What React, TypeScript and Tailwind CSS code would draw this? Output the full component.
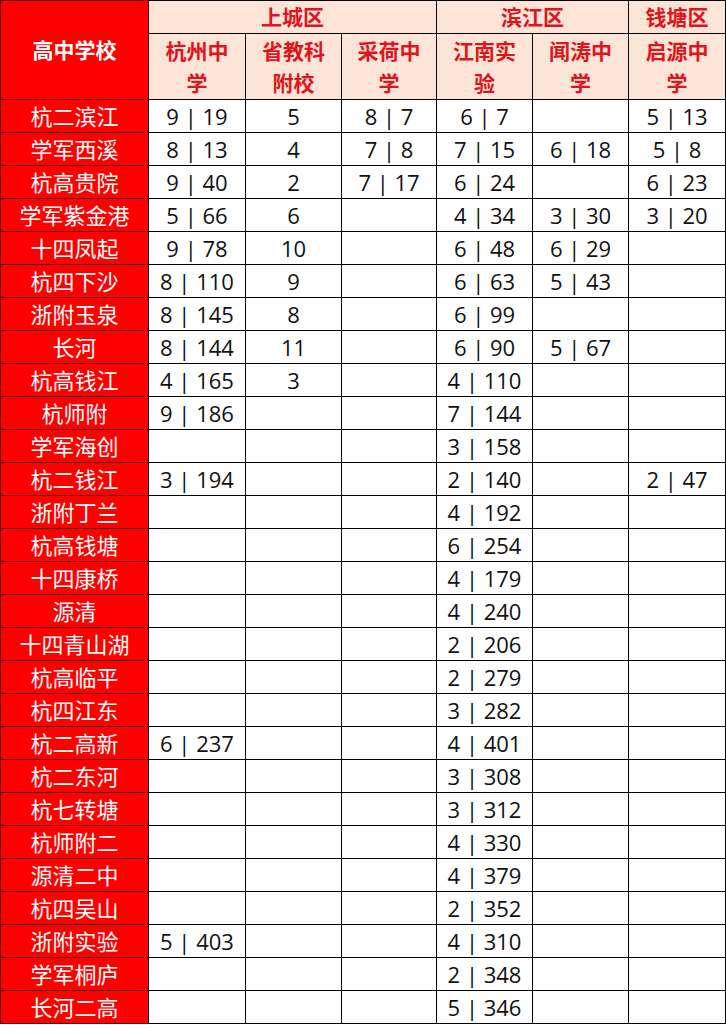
import React from 'react';

type Row = { name: string; cells: string[] };

const rows: Row[] = [
  { name: '杭二滨江', cells: ['9 | 19', '5', '8 | 7', '6 | 7', '', '5 | 13'] },
  { name: '学军西溪', cells: ['8 | 13', '4', '7 | 8', '7 | 15', '6 | 18', '5 | 8'] },
  { name: '杭高贵院', cells: ['9 | 40', '2', '7 | 17', '6 | 24', '', '6 | 23'] },
  { name: '学军紫金港', cells: ['5 | 66', '6', '', '4 | 34', '3 | 30', '3 | 20'] },
  { name: '十四凤起', cells: ['9 | 78', '10', '', '6 | 48', '6 | 29', ''] },
  { name: '杭四下沙', cells: ['8 | 110', '9', '', '6 | 63', '5 | 43', ''] },
  { name: '浙附玉泉', cells: ['8 | 145', '8', '', '6 | 99', '', ''] },
  { name: '长河', cells: ['8 | 144', '11', '', '6 | 90', '5 | 67', ''] },
  { name: '杭高钱江', cells: ['4 | 165', '3', '', '4 | 110', '', ''] },
  { name: '杭师附', cells: ['9 | 186', '', '', '7 | 144', '', ''] },
  { name: '学军海创', cells: ['', '', '', '3 | 158', '', ''] },
  { name: '杭二钱江', cells: ['3 | 194', '', '', '2 | 140', '', '2 | 47'] },
  { name: '浙附丁兰', cells: ['', '', '', '4 | 192', '', ''] },
  { name: '杭高钱塘', cells: ['', '', '', '6 | 254', '', ''] },
  { name: '十四康桥', cells: ['', '', '', '4 | 179', '', ''] },
  { name: '源清', cells: ['', '', '', '4 | 240', '', ''] },
  { name: '十四青山湖', cells: ['', '', '', '2 | 206', '', ''] },
  { name: '杭高临平', cells: ['', '', '', '2 | 279', '', ''] },
  { name: '杭四江东', cells: ['', '', '', '3 | 282', '', ''] },
  { name: '杭二高新', cells: ['6 | 237', '', '', '4 | 401', '', ''] },
  { name: '杭二东河', cells: ['', '', '', '3 | 308', '', ''] },
  { name: '杭七转塘', cells: ['', '', '', '3 | 312', '', ''] },
  { name: '杭师附二', cells: ['', '', '', '4 | 330', '', ''] },
  { name: '源清二中', cells: ['', '', '', '4 | 379', '', ''] },
  { name: '杭四吴山', cells: ['', '', '', '2 | 352', '', ''] },
  { name: '浙附实验', cells: ['5 | 403', '', '', '4 | 310', '', ''] },
  { name: '学军桐庐', cells: ['', '', '', '2 | 348', '', ''] },
  { name: '长河二高', cells: ['', '', '', '5 | 346', '', ''] },
];

const schools = [
  ['杭州中', '学'],
  ['省教科', '附校'],
  ['采荷中', '学'],
  ['江南实', '验'],
  ['闻涛中', '学'],
  ['启源中', '学'],
];

export default function App() {
  const font = { fontFamily: '"Open Sans", "Noto Sans CJK SC", sans-serif' };
  return (
    <div className="bg-white w-[726px] h-[1025px] overflow-hidden" style={font}>
      <table className="table-fixed border-collapse w-[725px] text-[22px] leading-none">
        <colgroup>
          <col className="w-[148px]" />
          <col className="w-[97px]" />
          <col className="w-[96px]" />
          <col className="w-[95px]" />
          <col className="w-[96px]" />
          <col className="w-[96px]" />
          <col className="w-[97px]" />
        </colgroup>
        <thead>
          <tr className="h-[33px]">
            <th rowSpan={2} className="bg-[#ff0000] text-white font-bold text-[21px] border border-[#5a0000] text-center align-middle">
              高中学校
            </th>
            <th colSpan={3} className="bg-[#fce4d6] text-[#e0141c] font-bold text-[21px] border border-black">
              上城区
            </th>
            <th colSpan={2} className="bg-[#fce4d6] text-[#e0141c] font-bold text-[21px] border border-black">
              滨江区
            </th>
            <th className="bg-[#fce4d6] text-[#e0141c] font-bold text-[21px] border border-black">
              钱塘区
            </th>
          </tr>
          <tr className="h-[66px]">
            {schools.map(s => <th key={s[0]} className="bg-[#fce4d6] text-[#e0141c] font-bold text-[21px] leading-[32px] border border-black">
                {s[0]}
                <br />
                {s[1]}
              </th>)}
          </tr>
        </thead>
        <tbody>
          {rows.map(r => <tr key={r.name} className="h-[33px]">
              <td className="bg-[#ff0000] text-white text-center border border-[#5a0000] border-r-black">
                {r.name}
              </td>
              {r.cells.map((c, i) => <td key={i} className="text-center text-[#111] border border-black">
                  {c}
                </td>)}
            </tr>)}
        </tbody>
      </table>
    </div>
  );
}
